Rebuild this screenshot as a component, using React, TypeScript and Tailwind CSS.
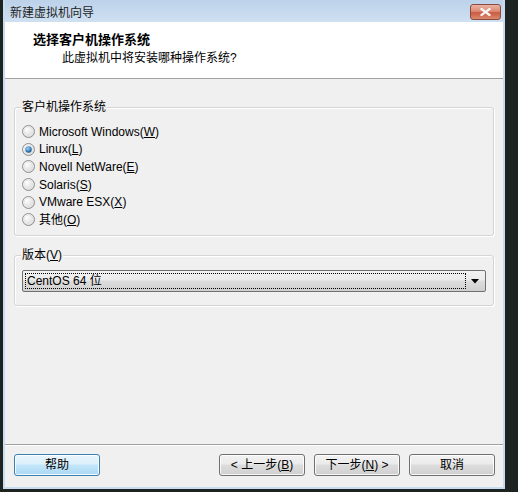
const FONT = "font-['Liberation_Sans','Noto_Sans_CJK_SC',sans-serif]";

const OS_LIST = [
  { label: "Microsoft Windows(", key: "W", checked: false },
  { label: "Linux(", key: "L", checked: true },
  { label: "Novell NetWare(", key: "E", checked: false },
  { label: "Solaris(", key: "S", checked: false },
  { label: "VMware ESX(", key: "X", checked: false },
  { label: "其他(", key: "O", checked: false },
];

function Radio({ checked }: { checked: boolean }) {
  return (
    <svg width="13" height="13" viewBox="0 0 13 13" className="shrink-0">
      <defs>
        <radialGradient id="rfill" cx="0.35" cy="0.3" r="0.8">
          <stop offset="0" stopColor="#ffffff" />
          <stop offset="1" stopColor="#d4d4d4" />
        </radialGradient>
        <radialGradient id="rdot" cx="0.4" cy="0.35" r="0.7">
          <stop offset="0" stopColor="#a9d6f5" />
          <stop offset="0.6" stopColor="#3d83c2" />
          <stop offset="1" stopColor="#1b4f7c" />
        </radialGradient>
      </defs>
      <circle cx="6.5" cy="6.5" r="6" fill="url(#rfill)" stroke="#8f8f8f" />
      <circle cx="6.5" cy="6.5" r="4.5" fill="none" stroke="#e6e6e6" />
      {checked ? <circle cx="6.5" cy="6.5" r="3.2" fill="url(#rdot)" /> : null}
    </svg>
  );
}

function GroupBox({
  title,
  className = "",
  children,
}: {
  title: React.ReactNode;
  className?: string;
  children: React.ReactNode;
}) {
  return (
    <div
      className={`relative rounded-[3px] border border-[#d5d5d5] shadow-[inset_1px_1px_0_#ffffff,1px_1px_0_#ffffff] ${className}`}
    >
      <span className="absolute -top-[9px] left-[6px] bg-[#f0f0f0] px-[1px] text-[12px] leading-[16px] text-black">
        {title}
      </span>
      {children}
    </div>
  );
}

function WizButton({
  children,
  primary = false,
}: {
  children: React.ReactNode;
  primary?: boolean;
}) {
  return (
    <button
      type="button"
      className={`flex h-[22px] w-[86px] items-center justify-center rounded-[3px] border text-[12px] leading-none text-black shadow-[inset_0_0_0_1px_rgba(255,255,255,0.85)] ${
        primary
          ? "border-[#3c7fb1] bg-[linear-gradient(to_bottom,#e8f5fc_0%,#dcf0fb_45%,#c3e6fa_50%,#aad8f3_100%)]"
          : "border-[#707070] bg-[linear-gradient(to_bottom,#f2f2f2_0%,#ebebeb_45%,#dddddd_50%,#cfcfcf_100%)]"
      }`}
    >
      {children}
    </button>
  );
}

export default function App() {
  return (
    <div className={`h-[492px] w-[518px] overflow-hidden bg-[#1c2321] ${FONT}`}>
      <div className="ml-[3px] flex h-[489px] w-[502px] flex-col bg-[#c9dbee] px-[2px] pb-[2px]">
        {/* title bar */}
        <div className="flex h-[22px] items-start justify-between bg-[linear-gradient(to_bottom,#bcd2ea,#cfe0f1)] pl-[5px] pr-[2px]">
          <span className="mt-[5px] text-[12px] leading-[16px] text-[#1e1e1e]">新建虚拟机向导</span>
          <div className="mt-[4px] flex h-[16px] w-[31px] items-center justify-center rounded-[3px] border border-[#8a4a40] bg-[linear-gradient(to_bottom,#eab3a3_0%,#dc8a74_45%,#cc5a40_55%,#d98a70_100%)]">
            <svg width="11" height="8" viewBox="0 0 11 8">
              <path
                d="M1.5 1 L9.5 7 M9.5 1 L1.5 7"
                stroke="#f4f4f4"
                strokeWidth="2.2"
                strokeLinecap="square"
              />
            </svg>
          </div>
        </div>

        {/* client area */}
        <div className="flex flex-1 flex-col bg-[#f0f0f0]">
          <div className="h-[57px] border-b border-[#a0a0a0] bg-white pt-[10px]">
            <div className="pl-[28px] text-[13px] font-bold leading-[16px] text-black">
              选择客户机操作系统
            </div>
            <div className="mt-[2px] pl-[57px] text-[12px] leading-[16px] text-black">
              此虚拟机中将安装哪种操作系统?
            </div>
          </div>

          <div className="flex-1 px-[9px] pt-[28px]">
            <GroupBox title="客户机操作系统" className="h-[129px] pl-[7px] pt-[15px]">
              {OS_LIST.map((os) => (
                <div key={os.key} className="flex h-[17.6px] items-center gap-[4px] text-[12px] text-black">
                  <Radio checked={os.checked} />
                  <span className="leading-[14px]">
                    {os.label}
                    <span className="underline">{os.key}</span>)
                  </span>
                </div>
              ))}
            </GroupBox>

            <GroupBox
              title={
                <>
                  版本(<span className="underline">V</span>)
                </>
              }
              className="mt-[19px] h-[51px] px-[7px] pt-[14px]"
            >
              <div className="flex h-[22px] items-stretch rounded-[2px] border border-[#707070] bg-[linear-gradient(to_bottom,#f2f2f2_0%,#ebebeb_45%,#dddddd_50%,#cfcfcf_100%)] p-[2px]">
                <div className="flex flex-1 items-center border border-dotted border-black pl-[1px] text-[12px] leading-none text-black">
                  CentOS 64 位
                </div>
                <div className="flex w-[17px] items-center justify-center">
                  <svg width="8" height="5" viewBox="0 0 8 5">
                    <path d="M0 0 H8 L4 4.5 Z" fill="#000000" />
                  </svg>
                </div>
              </div>
            </GroupBox>
          </div>

          <div className="flex h-[43px] border-t border-[#a0a0a0] pl-[9px] pr-[8px] pt-[9px] shadow-[inset_0_1px_0_#ffffff]">
            <WizButton primary>帮助</WizButton>
            <div className="ml-auto flex gap-[9px]">
              <WizButton>
                &lt; 上一步(<span className="underline">B</span>)
              </WizButton>
              <WizButton>
                下一步(<span className="underline">N</span>) &gt;
              </WizButton>
              <WizButton>取消</WizButton>
            </div>
          </div>
        </div>
      </div>
    </div>
  );
}
